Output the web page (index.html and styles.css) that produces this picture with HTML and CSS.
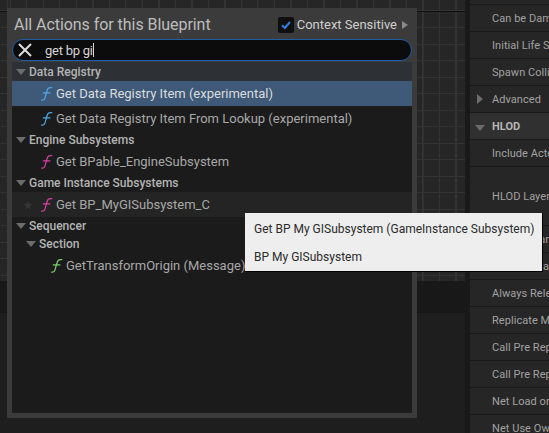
FILE: index.html
```
<!DOCTYPE html>
<html lang="en">
<head>
<meta charset="utf-8">
<title>All Actions for this Blueprint</title>
<link rel="stylesheet" href="styles.css">
</head>
<body>
<svg class="defs" width="0" height="0" aria-hidden="true">
  <symbol id="fn" viewBox="0 0 16 16"><path d="M2.800 15c2 .5 3-.2 3.600-2.400L8.600 4.800C9.200 2.400 10.500 1.200 13.600 1.800M4.600 7.400h7" fill="none" stroke="currentColor" stroke-width="1.300" stroke-linecap="round"/></symbol>
</svg>
<div class="canvas">
  <div class="grid"></div>
  <div class="shade"></div>
  <div class="floor"></div>
  <div class="popup">
    <div class="head">
      <span class="title">All Actions for this Blueprint</span>
      <span class="context">
        <span class="check"><svg width="12" height="12" viewBox="0 0 12 12"><path d="M2 6.300 4.800 9 10 3" fill="none" stroke="#2a7fe0" stroke-width="2"/></svg></span>
        <span class="context-label">Context Sensitive</span>
        <span class="arrow-right"></span>
      </span>
    </div>
    <div class="search">
      <svg class="clear" width="16" height="16" viewBox="0 0 16 16"><path d="M2 2 14 14M14 2 2 14" stroke="#dcdcdc" stroke-width="2"/></svg>
      <span class="query">get bp gi</span><span class="caret"></span>
    </div>
    <div class="list">
      <div class="cat cat-first"><span class="tri"></span>Data Registry</div>
      <div class="item selected"><svg class="fn blue"><use href="#fn"/></svg>Get Data Registry Item (experimental)</div>
      <div class="item"><svg class="fn blue"><use href="#fn"/></svg>Get Data Registry Item From Lookup (experimental)</div>
      <div class="cat"><span class="tri"></span>Engine Subsystems</div>
      <div class="item"><svg class="fn pink"><use href="#fn"/></svg>Get BPable_EngineSubsystem</div>
      <div class="cat"><span class="tri"></span>Game Instance Subsystems</div>
      <div class="item hover">
        <svg class="star" width="10" height="10" viewBox="0 0 10 10"><path d="M5 .6 6.300 3.600 9.600 3.900 7.100 6.100 7.900 9.400 5 7.700 2.100 9.400 2.900 6.100.4 3.900 3.700 3.600Z" fill="#333"/></svg>
        <svg class="fn pink"><use href="#fn"/></svg>Get BP_MyGISubsystem_C
      </div>
      <div class="cat"><span class="tri"></span>Sequencer</div>
      <div class="cat sub"><span class="tri"></span>Section</div>
      <div class="item deep"><svg class="fn green"><use href="#fn"/></svg>GetTransformOrigin (Message)</div>
    </div>
  </div>
  <div class="tooltip">
    <div>Get BP My GISubsystem (GameInstance Subsystem)</div>
    <div>BP My GISubsystem</div>
  </div>
</div>
<div class="panel">
  <div class="row stub"></div>
  <div class="row">Can be Damaged</div>
  <div class="row">Initial Life Span</div>
  <div class="row">Spawn Collision Handling Method</div>
  <div class="row"><span class="adv"></span>Advanced</div>
  <div class="row section"><span class="tri"></span>HLOD</div>
  <div class="row">Include Actor in HLOD</div>
  <div class="row tall">HLOD Layer</div>
  <div class="row">Net Dormancy</div>
  <div class="row">Only Relevant to Owner</div>
  <div class="row">Always Relevant</div>
  <div class="row">Replicate Movement</div>
  <div class="row">Call Pre Replication</div>
  <div class="row">Call Pre Replication For Replay</div>
  <div class="row">Net Load on Client</div>
  <div class="row">Net Use Owner Relevancy</div>
</div>
</body>
</html>
```
FILE: styles.css
```
* { box-sizing: border-box; }
html, body { margin: 0; height: 100%; overflow: hidden; }
body {
  display: flex;
  width: 549px;
  height: 433px;
  background: #1e1e1e;
  font-family: Roboto, "Liberation Sans", sans-serif;
}
.defs { position: absolute; }

.canvas {
  position: relative;
  z-index: 1;
  width: 470px;
  flex: none;
  display: flex;
  flex-direction: column;
  border-right: 5px solid #191919;
}
.grid {
  height: 281px;
  background-color: #262626;
  background-image:
    linear-gradient(#101010, #101010),
    repeating-linear-gradient(90deg, #333 0 1px, transparent 1px 16.5px),
    repeating-linear-gradient(0deg, #333 0 1px, transparent 1px 16.5px);
  background-size: 100% 1px, 100% 100%, 100% 100%;
  background-position: 0 11px, 10px 0, 0 11px;
  background-repeat: no-repeat, repeat, repeat;
}
.shade { height: 32px; background: #181818; }
.floor { flex: 1; background: #1e1e1e; }

.popup {
  position: absolute;
  left: 7px;
  top: 8px;
  width: 410px;
  height: 410px;
  background: #3b3b3b;
  padding: 0 5px 5px;
  display: flex;
  flex-direction: column;
}
.head {
  height: 31px;
  flex: none;
  display: flex;
  align-items: center;
  justify-content: space-between;
  padding: 2px 4px 0 2px;
}
.title { font-size: 16px; color: #bdbdbd; letter-spacing: -.05px; }
.context { display: flex; align-items: center; }
.check {
  width: 16px;
  height: 16px;
  border-radius: 2px;
  background: #0f0f0f;
  display: flex;
  align-items: center;
  justify-content: center;
}
.context-label { margin-left: 3px; font-size: 13px; color: #cfcfcf; }
.arrow-right {
  margin-left: 5px;
  border-left: 6px solid #8a8a8a;
  border-top: 4px solid transparent;
  border-bottom: 4px solid transparent;
}
.search {
  height: 22px;
  flex: none;
  border: 1px solid #1f5da6;
  border-radius: 11px;
  background: #0c0c0c;
  display: flex;
  align-items: center;
  padding-left: 4px;
  font-size: 13px;
  letter-spacing: -.25px;
  color: #d6d6d6;
}
.clear { flex: none; }
.query { margin-left: 12px; }
.caret { width: 1px; height: 14px; background: #d6d6d6; }

.list { flex: 1; background: #1b1b1b; margin-top: 1px; }
.cat {
  height: 18px;
  display: flex;
  align-items: center;
  padding-left: 4px;
  font-size: 12px;
  font-weight: 500;
  color: #b4b4b4;
}
.cat-first { height: 19px; background: #2d3034; }
.cat.sub { padding-left: 14px; }
.tri {
  width: 0;
  height: 0;
  margin-right: 3px;
  border-top: 6px solid #6c6c6c;
  border-left: 5px solid transparent;
  border-right: 5px solid transparent;
}
.item {
  position: relative;
  height: 25px;
  display: flex;
  align-items: center;
  padding-left: 27px;
  font-size: 13px;
  color: #a8a8a8;
  white-space: nowrap;
}
.item.selected { background: #3e5a78; color: #dcdcdc; }
.item.hover { background: #242424; }
.item.deep { padding-left: 37px; height: 25px; }
.fn { width: 15px; height: 15px; margin-right: 2px; flex: none; }
.blue { color: #4fa8e8; }
.pink { color: #d83fa8; }
.green { color: #7ccf6a; }
.star { position: absolute; left: 11px; top: 8px; }

.tooltip {
  position: absolute;
  left: 245px;
  top: 213px;
  width: 298px;
  height: 59px;
  background: #eeeeee;
  border-right: 1px solid #000;
  border-bottom: 1px solid #000;
  padding: 2px 0 0 9px;
  font-size: 12px;
  color: #2b2b2b;
  white-space: nowrap;
}
.tooltip div { height: 28px; line-height: 28px; }

.panel { flex: 1; min-width: 0; background: #1a1a1a; overflow: hidden; }
.row {
  position: relative;
  height: 27px;
  display: flex;
  align-items: center;
  padding-left: 22px;
  border-bottom: 1px solid #191919;
  background: #262626;
  font-size: 11px;
  letter-spacing: .05px;
  color: #a2a2a2;
  white-space: nowrap;
}
.stub { height: 5px; }
.tall { height: 59px; }
.section { background: #303030; font-weight: 700; color: #b6b6b6; }
.section .tri { position: absolute; left: 5px; top: 12px; }
.adv {
  position: absolute;
  left: 7px;
  top: 8px;
  border-left: 6px solid #6c6c6c;
  border-top: 5px solid transparent;
  border-bottom: 5px solid transparent;
}
```
